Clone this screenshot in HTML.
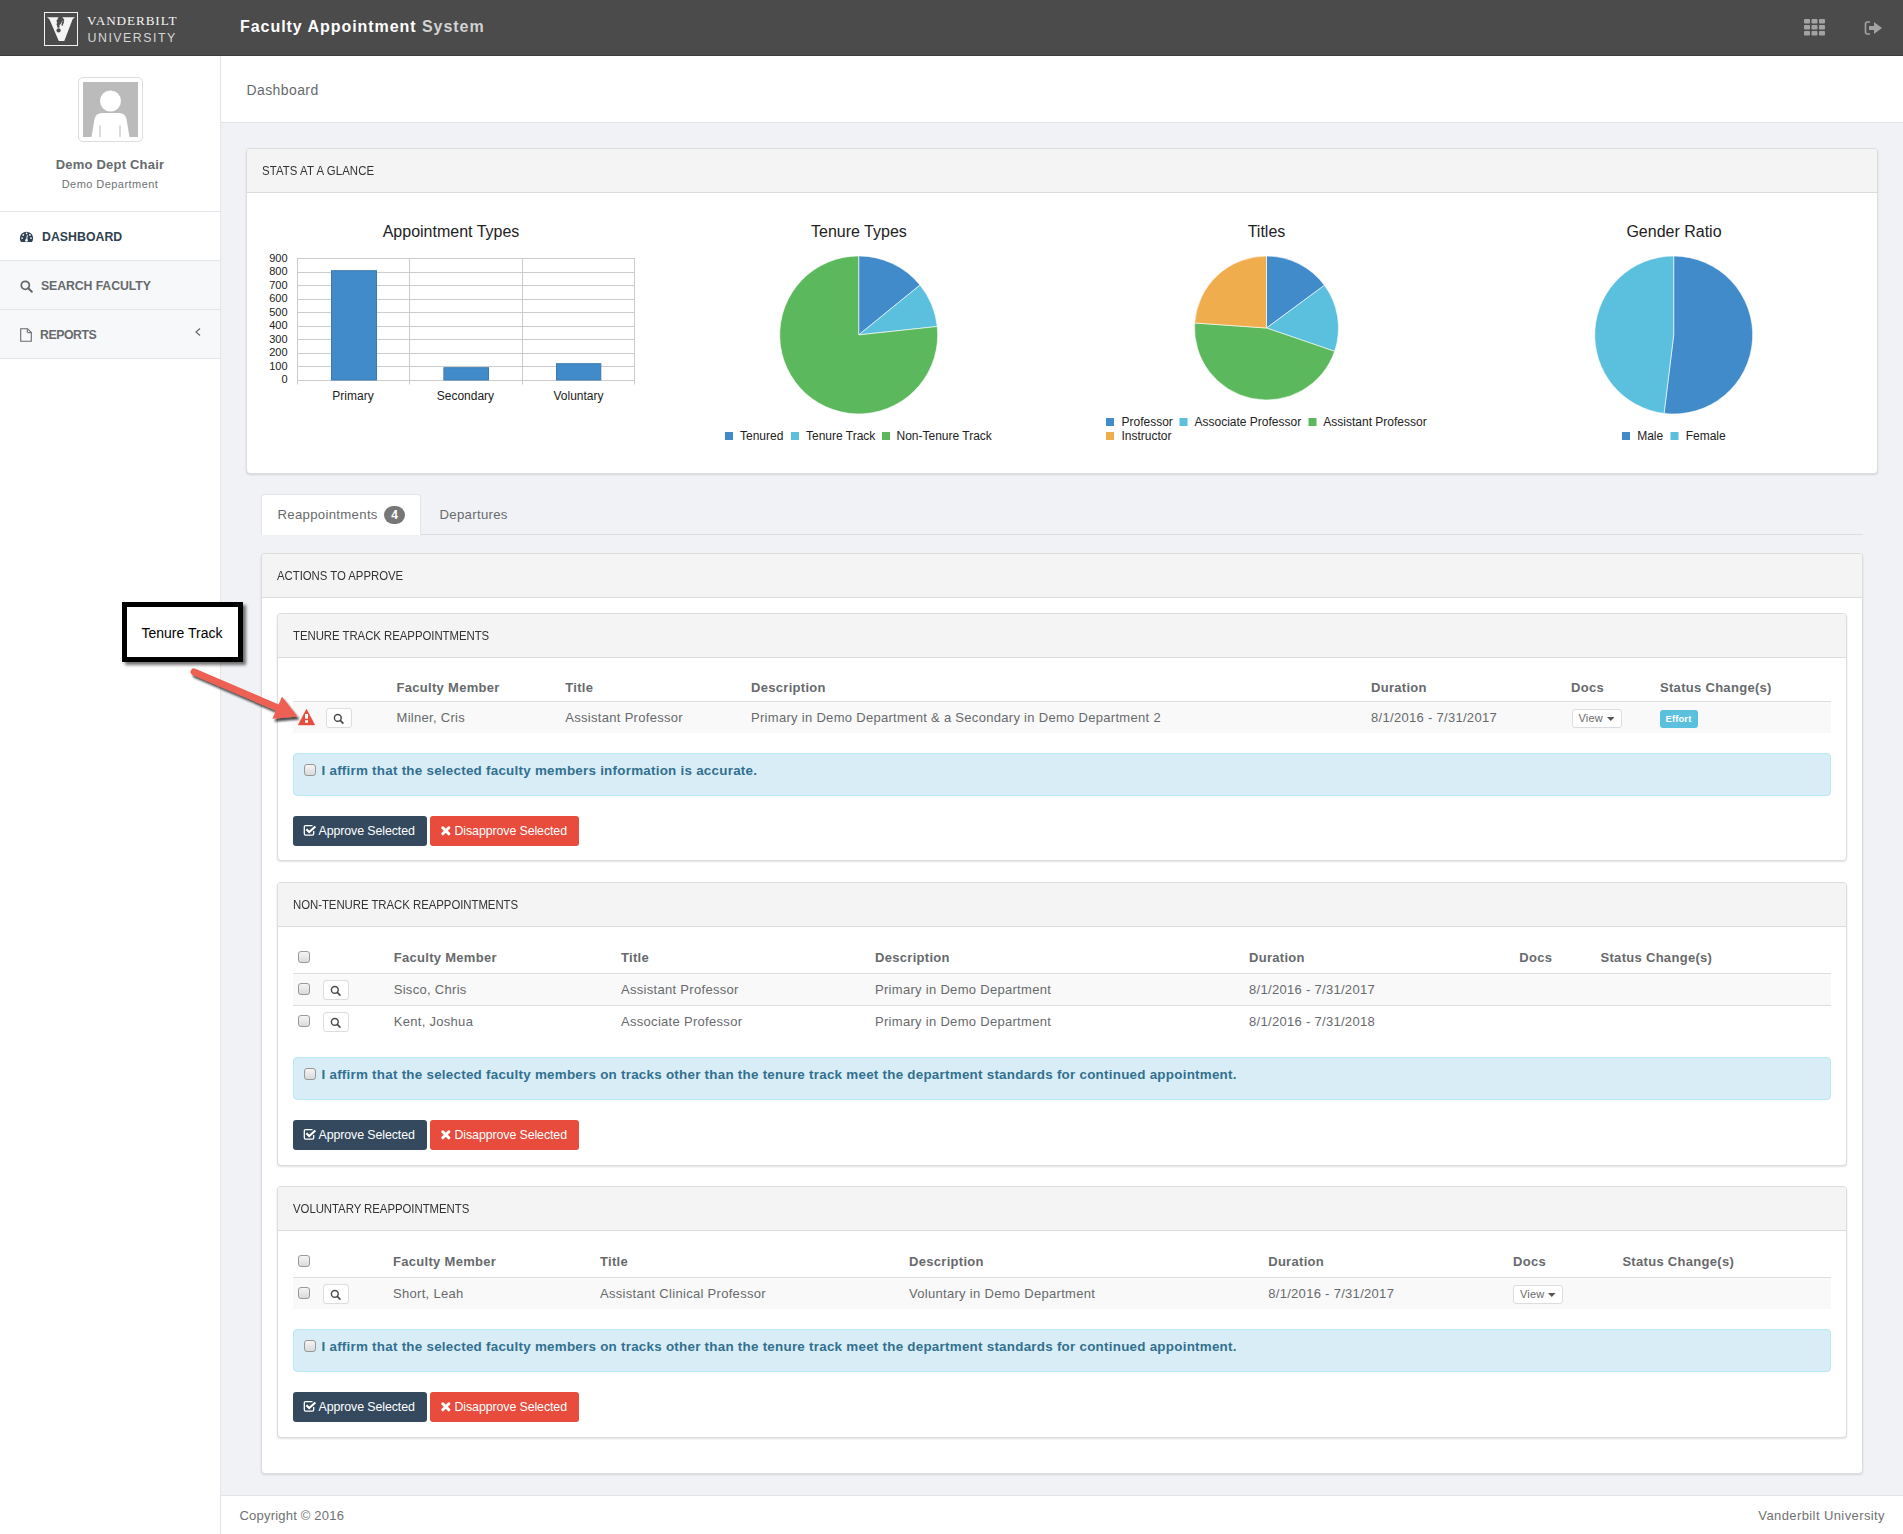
<!DOCTYPE html>
<html><head><meta charset="utf-8">
<style>
*{box-sizing:border-box;margin:0;padding:0}
html,body{width:1903px;height:1534px;overflow:hidden}
body{position:relative;background:#f1f2f6;font-family:"Liberation Sans",sans-serif;color:#676a6c;font-size:13px}
.abs{position:absolute}
.t{position:absolute;white-space:nowrap;line-height:1}
#hdr{left:0;top:0;width:1903px;height:56px;background:#4b4b4b;border-bottom:1px solid #3d3d3d}
#side{left:0;top:56px;width:221px;height:1478px;background:#fff;border-right:1px solid #e4e5e7}
.hl{position:absolute;left:0;width:220px;height:1px;background:#e4e5e7}
.navbg{position:absolute;left:0;width:220px;background:#f7f8fa}
#ph{left:221px;top:56px;width:1682px;height:67px;background:#fff;border-bottom:1px solid #e2e3e6}
#foot{left:221px;top:1495px;width:1682px;height:39px;background:#fff;border-top:1px solid #e2e3e6}
.panel{position:absolute;background:#fff;border:1px solid #dcdcdc;border-radius:4px;box-shadow:0 1px 2px rgba(0,0,0,.12)}
.ph{position:absolute;left:0;top:0;right:0;background:#f4f4f4;border-bottom:1px solid #dcdcdc;border-radius:3px 3px 0 0}
.ptitle{color:#333;font-size:12.6px;letter-spacing:-0.05px;transform:scaleX(0.905);transform-origin:0 0}
.th{font-weight:bold;color:#676a6c;font-size:13px;letter-spacing:0.3px}
.td{color:#676a6c;font-size:13px;letter-spacing:0.3px}
.row{position:absolute;background:#f9f9f9}
.rline{position:absolute;height:1px;background:#dedede}
.alert{position:absolute;background:#d9edf7;border:1px solid #bce8f1;border-radius:4px}
.atext{color:#31708f;font-weight:bold;font-size:13.4px;letter-spacing:0.25px}
.cb{position:absolute;width:12px;height:12px;border:1px solid #989898;border-radius:3px;background:linear-gradient(#f4f4f4,#dadada)}
.sbtn{position:absolute;width:26px;height:20px;border:1px solid #dcdde0;border-radius:3px;background:#fff}
.btn{position:absolute;height:30px;border-radius:3px;color:#fff;font-size:12px;letter-spacing:0.1px}
.approve{background:#34495e}
.disapprove{background:#e74c3c}
</style></head><body>

<!-- HEADER -->
<div id="hdr" class="abs"></div>
<div class="abs" style="left:44px;top:12px;width:34px;height:34px;border:1.6px solid #f2f2f2"></div>
<svg class="abs" style="left:44px;top:12px" width="34" height="34" viewBox="0 0 34 34">
  <path d="M3 5.2 L14.8 5.2 L13.6 6.6 L16.6 12.5 L19.4 6.6 L18.2 5.2 L31 5.2 L28.6 7.2 L20.3 29 L14.8 29 L5.4 7.2 Z" fill="#f4f4f4"/>
  <g fill="#4b4b4b">
    <path d="M13.2 7.2 C15.6 7.6 16.4 9.4 15.6 10.6 C16.8 11.4 16.4 12.8 15.2 13.2 C16.2 14.2 15.8 15.6 14.4 15.8 C13 15.6 12.6 14.4 13.4 13.6 C12.2 13 12.2 11.6 13.4 11 C12.4 10 12.4 8.4 13.2 7.2 Z"/>
    <circle cx="14.6" cy="18.4" r="2.1"/>
    <path d="M19.6 6.8 C20.6 7.6 20.4 8.8 19.6 9.4 C20.4 10.2 20 11.4 19 11.8 C19.4 12.8 18.8 13.8 18 14 L17.4 13 C18 12 17.8 10.6 18.4 9.6 C18 8.6 18.6 7.4 19.6 6.8 Z"/>
  </g>
</svg>
<div class="t" style="left:87px;top:13.5px;font-family:'Liberation Serif',serif;font-size:13.2px;letter-spacing:0.9px;color:#f4f4f4">VANDERBILT</div>
<div class="t" style="left:87.5px;top:31.5px;font-size:12.4px;letter-spacing:1.5px;color:#d6d6d6;font-weight:normal">UNIVERSITY</div>
<div class="t" style="left:240px;top:19px;font-size:16px;font-weight:bold;color:#fff;letter-spacing:0.95px">Faculty Appointment <span style="color:#d2d2d2">System</span></div>
<svg class="abs" style="left:1804px;top:19px" width="21" height="17" viewBox="0 0 21 17">
  <g fill="#a3a3a3">
    <rect x="0" y="0" width="6" height="4.5" rx="1"/><rect x="7.5" y="0" width="6" height="4.5" rx="1"/><rect x="15" y="0" width="6" height="4.5" rx="1"/>
    <rect x="0" y="6" width="6" height="4.5" rx="1"/><rect x="7.5" y="6" width="6" height="4.5" rx="1"/><rect x="15" y="6" width="6" height="4.5" rx="1"/>
    <rect x="0" y="12" width="6" height="4.5" rx="1"/><rect x="7.5" y="12" width="6" height="4.5" rx="1"/><rect x="15" y="12" width="6" height="4.5" rx="1"/>
  </g>
</svg>
<svg class="abs" style="left:1864px;top:20px" width="19" height="16" viewBox="0 0 19 16">
  <path d="M6 2 H3.5 Q1.5 2 1.5 4 V12 Q1.5 14 3.5 14 H6" fill="none" stroke="#a3a3a3" stroke-width="1.6"/>
  <path d="M5 6 H10 V2 L18 8 L10 14 V10 H5 Z" fill="#a3a3a3"/>
</svg>

<!-- SIDEBAR -->
<div id="side" class="abs"></div>
<div class="abs" style="left:78px;top:77px;width:65px;height:65px;border:1px solid #dcdcdc;border-radius:5px;background:#fff"></div>
<svg class="abs" style="left:83px;top:82px" width="55" height="55" viewBox="0 0 55 55">
  <rect width="55" height="55" fill="#bbbbbb"/>
  <circle cx="27.5" cy="19" r="10.5" fill="#fff"/>
  <path d="M8.5 55 L11.5 37 Q13 31 19 31 H36 Q42 31 43.5 37 L46.5 55 Z" fill="#fff"/>
  <rect x="16" y="43.5" width="2" height="11.5" fill="#dcdcdc"/><rect x="36" y="43.5" width="2" height="11.5" fill="#dcdcdc"/>
</svg>
<div class="t" style="left:0;width:220px;text-align:center;top:157.5px;font-size:13px;font-weight:bold;color:#676a6c;letter-spacing:0.2px">Demo Dept Chair</div>
<div class="t" style="left:0;width:220px;text-align:center;top:178.5px;font-size:11px;color:#6f7274;letter-spacing:0.45px">Demo Department</div>
<div class="hl" style="top:211px"></div>
<div class="navbg" style="top:261px;height:48px"></div>
<div class="navbg" style="top:310px;height:48px"></div>
<div class="hl" style="top:260px"></div>
<div class="hl" style="top:309px"></div>
<div class="hl" style="top:358px"></div>
<svg class="abs" style="left:19px;top:231px" width="15" height="12" viewBox="0 0 15 12">
  <path d="M2.03 11 A6.6 6.6 0 1 1 12.97 11 Z" fill="#2f4050"/>
  <g fill="#fff"><circle cx="7.6" cy="2.4" r="0.9"/><circle cx="4.3" cy="3.9" r="0.9"/><circle cx="10.9" cy="3.9" r="0.9"/><circle cx="3.1" cy="7.1" r="0.9"/><circle cx="12" cy="7.1" r="0.9"/><circle cx="7.5" cy="9.4" r="1.3"/></g>
  <line x1="8.4" y1="4.2" x2="7.5" y2="9.4" stroke="#fff" stroke-width="1"/>
</svg>
<div class="t" style="left:42px;top:230.5px;font-size:12.3px;font-weight:bold;color:#2f4050;letter-spacing:0.04px">DASHBOARD</div>
<svg class="abs" style="left:20px;top:280px" width="13" height="13" viewBox="0 0 13 13">
  <circle cx="5.3" cy="5.3" r="4" fill="none" stroke="#676a6c" stroke-width="1.8"/><line x1="8.3" y1="8.3" x2="11.8" y2="11.8" stroke="#676a6c" stroke-width="2" stroke-linecap="round"/>
</svg>
<div class="t" style="left:41px;top:279.5px;font-size:12.3px;font-weight:bold;color:#676a6c;letter-spacing:-0.1px">SEARCH FACULTY</div>
<svg class="abs" style="left:20px;top:328px" width="12" height="14" viewBox="0 0 12 14">
  <path d="M0.7 0.7 H7.5 L11.3 4.5 V13.3 H0.7 Z" fill="none" stroke="#676a6c" stroke-width="1.1"/><path d="M7.3 0.7 V4.7 H11.3" fill="none" stroke="#676a6c" stroke-width="1"/>
</svg>
<div class="t" style="left:40px;top:328.5px;font-size:12.3px;font-weight:bold;color:#676a6c;letter-spacing:-0.45px">REPORTS</div>
<svg class="abs" style="left:195px;top:328px" width="6" height="8" viewBox="0 0 6 8"><path d="M5 0.5 L1 4 L5 7.5" fill="none" stroke="#676a6c" stroke-width="1.2"/></svg>

<!-- PAGE HEADING -->
<div id="ph" class="abs"></div>
<div class="t" style="left:246.5px;top:82.5px;font-size:14px;color:#676a6c;letter-spacing:0.4px">Dashboard</div>

<!-- FOOTER -->
<div id="foot" class="abs"></div>
<div class="t" style="left:239.5px;top:1509px;font-size:13px;color:#6f7274;letter-spacing:0.2px">Copyright © 2016</div>
<div class="t" style="right:18px;top:1509px;font-size:13px;color:#6f7274;letter-spacing:0.4px">Vanderbilt University</div>

<!-- STATS PANEL -->
<div class="panel" style="left:246px;top:148px;width:1632px;height:326px"><div class="ph" style="height:44px"></div></div>
<div class="t ptitle" style="left:262px;top:164.5px;letter-spacing:0.1px">STATS AT A GLANCE</div>
<svg class="abs" style="left:0;top:0" width="1903" height="500" viewBox="0 0 1903 500" font-family="Liberation Sans, sans-serif">
<g font-size="16" fill="#222" text-anchor="middle">
<text x="451" y="237.2">Appointment Types</text>
<text x="858.9" y="237.2">Tenure Types</text>
<text x="1266.5" y="237.2">Titles</text>
<text x="1674" y="237.2">Gender Ratio</text>
</g>
<line x1="297" y1="258.5" x2="635" y2="258.5" stroke="#cccccc" stroke-width="1"/>
<text x="287.5" y="261.8" text-anchor="end" font-size="11" fill="#222">900</text>
<line x1="297" y1="272.5" x2="635" y2="272.5" stroke="#cccccc" stroke-width="1"/>
<text x="287.5" y="275.3" text-anchor="end" font-size="11" fill="#222">800</text>
<line x1="297" y1="285.5" x2="635" y2="285.5" stroke="#cccccc" stroke-width="1"/>
<text x="287.5" y="288.8" text-anchor="end" font-size="11" fill="#222">700</text>
<line x1="297" y1="299.5" x2="635" y2="299.5" stroke="#cccccc" stroke-width="1"/>
<text x="287.5" y="302.3" text-anchor="end" font-size="11" fill="#222">600</text>
<line x1="297" y1="312.5" x2="635" y2="312.5" stroke="#cccccc" stroke-width="1"/>
<text x="287.5" y="315.8" text-anchor="end" font-size="11" fill="#222">500</text>
<line x1="297" y1="326.5" x2="635" y2="326.5" stroke="#cccccc" stroke-width="1"/>
<text x="287.5" y="329.3" text-anchor="end" font-size="11" fill="#222">400</text>
<line x1="297" y1="339.5" x2="635" y2="339.5" stroke="#cccccc" stroke-width="1"/>
<text x="287.5" y="342.8" text-anchor="end" font-size="11" fill="#222">300</text>
<line x1="297" y1="353.5" x2="635" y2="353.5" stroke="#cccccc" stroke-width="1"/>
<text x="287.5" y="356.3" text-anchor="end" font-size="11" fill="#222">200</text>
<line x1="297" y1="366.5" x2="635" y2="366.5" stroke="#cccccc" stroke-width="1"/>
<text x="287.5" y="369.8" text-anchor="end" font-size="11" fill="#222">100</text>
<line x1="297" y1="380.5" x2="635" y2="380.5" stroke="#cccccc" stroke-width="1"/>
<text x="287.5" y="383.3" text-anchor="end" font-size="11" fill="#222">0</text>
<line x1="297.5" y1="258" x2="297.5" y2="384.5" stroke="#cccccc" stroke-width="1"/>
<line x1="409.5" y1="258" x2="409.5" y2="384.5" stroke="#cccccc" stroke-width="1"/>
<line x1="522.5" y1="258" x2="522.5" y2="384.5" stroke="#cccccc" stroke-width="1"/>
<line x1="634.5" y1="258" x2="634.5" y2="384.5" stroke="#cccccc" stroke-width="1"/>
<rect x="331.5" y="270.7" width="45" height="109.30000000000001" fill="#428bca" stroke="#3a7ab3" stroke-width="1"/>
<rect x="443.9" y="367.7" width="44.60000000000002" height="12.300000000000011" fill="#428bca" stroke="#3a7ab3" stroke-width="1"/>
<rect x="556.5" y="363.7" width="44.299999999999955" height="16.30000000000001" fill="#428bca" stroke="#3a7ab3" stroke-width="1"/>
<text x="353" y="399.5" text-anchor="middle" font-size="12" fill="#222">Primary</text>
<text x="465.4" y="399.5" text-anchor="middle" font-size="12" fill="#222">Secondary</text>
<text x="578.5" y="399.5" text-anchor="middle" font-size="12" fill="#222">Voluntary</text>
<path d="M858.7,334.9 L858.70,255.90 A79,79 0 0 1 920.01,285.08 Z" fill="#428bca" stroke="#fff" stroke-width="0.6"/>
<path d="M858.7,334.9 L920.01,285.08 A79,79 0 0 1 937.25,326.51 Z" fill="#5bc0de" stroke="#fff" stroke-width="0.6"/>
<path d="M858.7,334.9 L937.25,326.51 A79,79 0 1 1 858.70,255.90 Z" fill="#5cb85c" stroke="#fff" stroke-width="0.6"/>
<path d="M1266.5,328 L1266.50,256.00 A72,72 0 0 1 1324.45,285.27 Z" fill="#428bca" stroke="#fff" stroke-width="0.6"/>
<path d="M1266.5,328 L1324.45,285.27 A72,72 0 0 1 1334.62,351.32 Z" fill="#5bc0de" stroke="#fff" stroke-width="0.6"/>
<path d="M1266.5,328 L1334.62,351.32 A72,72 0 0 1 1194.68,322.98 Z" fill="#5cb85c" stroke="#fff" stroke-width="0.6"/>
<path d="M1266.5,328 L1194.68,322.98 A72,72 0 0 1 1266.50,256.00 Z" fill="#f0ad4e" stroke="#fff" stroke-width="0.6"/>
<path d="M1673.7,335 L1673.70,256.00 A79,79 0 1 1 1664.07,413.41 Z" fill="#428bca" stroke="#fff" stroke-width="0.6"/>
<path d="M1673.7,335 L1664.07,413.41 A79,79 0 0 1 1673.70,256.00 Z" fill="#5bc0de" stroke="#fff" stroke-width="0.6"/>
<g font-size="12" fill="#222">
<rect x="725" y="432" width="8" height="8" fill="#428bca"/><text x="740" y="440">Tenured</text>
<rect x="791" y="432" width="8" height="8" fill="#5bc0de"/><text x="806" y="440">Tenure Track</text>
<rect x="882" y="432" width="8" height="8" fill="#5cb85c"/><text x="896.5" y="440">Non-Tenure Track</text>
<rect x="1106" y="418" width="8" height="8" fill="#428bca"/><text x="1121.5" y="426">Professor</text>
<rect x="1179.5" y="418" width="8" height="8" fill="#5bc0de"/><text x="1194.5" y="426">Associate Professor</text>
<rect x="1308.5" y="418" width="8" height="8" fill="#5cb85c"/><text x="1323.3" y="426">Assistant Professor</text>
<rect x="1106" y="432" width="8" height="8" fill="#f0ad4e"/><text x="1121.5" y="440">Instructor</text>
<rect x="1622" y="432" width="8" height="8" fill="#428bca"/><text x="1637.2" y="440">Male</text>
<rect x="1670.5" y="432" width="8" height="8" fill="#5bc0de"/><text x="1685.7" y="440">Female</text>
</g>
</svg>

<!--TABS-->
<div class="abs" style="left:421px;top:534px;width:1442px;height:1px;background:#dcdde0"></div>
<div class="abs" style="left:261px;top:494px;width:160px;height:41px;background:#fff;border:1px solid #e3e4e7;border-bottom:none;border-radius:4px 4px 0 0"></div>
<div class="t" style="left:277.5px;top:508px;font-size:13.2px;color:#676a6c;letter-spacing:0.3px">Reappointments</div>
<div class="abs" style="left:384px;top:506px;width:21px;height:18px;border-radius:9px;background:#777;color:#fff;font-weight:bold;font-size:12px;line-height:18px;text-align:center">4</div>
<div class="t" style="left:439.5px;top:508px;font-size:13.2px;color:#676a6c;letter-spacing:0.3px">Departures</div>
<!--ACTIONS-->
<div class="panel" style="left:261px;top:553px;width:1602px;height:921px"><div class="ph" style="height:44px"></div></div>
<div class="t ptitle" style="left:277px;top:569.5px">ACTIONS TO APPROVE</div>
<div class="panel" style="left:277px;top:613px;width:1570px;height:248px"><div class="ph" style="height:44px"></div></div><div class="t ptitle" style="left:293px;top:629.5px">TENURE TRACK REAPPOINTMENTS</div>
<div class="t th" style="left:396.5px;top:681px">Faculty Member</div><div class="t th" style="left:565.3px;top:681px">Title</div><div class="t th" style="left:751px;top:681px">Description</div><div class="t th" style="left:1371px;top:681px">Duration</div><div class="t th" style="left:1571px;top:681px">Docs</div><div class="t th" style="left:1660px;top:681px">Status Change(s)</div>
<div class="rline" style="left:293px;top:701px;width:1538px"></div>
<div class="row" style="left:293px;top:702px;width:1538px;height:31px"></div>
<svg class="abs" style="left:297px;top:708px" width="19" height="18" viewBox="0 0 19 18"><path d="M9.5 1.2 L17.8 16.9 H1.2 Z" fill="#e74c3c" stroke="#e74c3c" stroke-width="0.5" stroke-linejoin="round"/><rect x="8.1" y="6" width="2.9" height="4.8" fill="#fff"/><rect x="8.1" y="12.2" width="2.9" height="2.6" fill="#fff"/></svg>
<div class="sbtn" style="left:326px;top:708px"></div><svg class="abs" style="left:333px;top:712.5px" width="12" height="12" viewBox="0 0 12 12"><circle cx="4.8" cy="4.9" r="3.4" fill="none" stroke="#4a4a4a" stroke-width="1.45"/><line x1="7.3" y1="7.4" x2="9.9" y2="10.1" stroke="#4a4a4a" stroke-width="1.7" stroke-linecap="round"/></svg>
<div class="t td" style="left:396.5px;top:711px">Milner, Cris</div><div class="t td" style="left:565.3px;top:711px">Assistant Professor</div><div class="t td" style="left:751px;top:711px">Primary in Demo Department &amp; a Secondary in Demo Department 2</div><div class="t td" style="left:1371px;top:711px">8/1/2016 - 7/31/2017</div>
<div class="sbtn" style="left:1571.5px;top:708.5px;width:50px;height:19px"></div><div class="t" style="left:1578.5px;top:713.0px;font-size:11px;color:#676a6c;letter-spacing:0.2px">View</div><svg class="abs" style="left:1606.5px;top:716.5px" width="8" height="4" viewBox="0 0 8 4"><path d="M0 0 H7.5 L3.75 4 Z" fill="#555"/></svg>
<div class="abs" style="left:1660px;top:710px;width:38px;height:18px;border-radius:3px;background:#5bc0de"></div><div class="t" style="left:1665.5px;top:713.5px;font-size:9.5px;font-weight:bold;color:#fff;letter-spacing:0.1px">Effort</div>
<div class="alert" style="left:293px;top:753px;width:1538px;height:43px"></div><div class="cb" style="left:304px;top:763.5px"></div><div class="t atext" style="left:321.5px;top:764px">I affirm that the selected faculty members information is accurate.</div>
<div class="btn approve" style="left:293px;top:816px;width:134px"></div><svg class="abs" style="left:303px;top:824px" width="14" height="13" viewBox="0 0 14 13"><path d="M9.5 1.6 H2.6 Q1.3 1.6 1.3 2.9 V9.8 Q1.3 11.1 2.6 11.1 H9.4 Q10.7 11.1 10.7 9.8 V7" fill="none" stroke="#fff" stroke-width="1.3"/><path d="M3.4 5.2 L6.2 8.1 L12.4 2.4" fill="none" stroke="#fff" stroke-width="2.1"/></svg><div class="t" style="left:318.5px;top:824.5px;font-size:12.4px;color:#fff;letter-spacing:-0.1px">Approve Selected</div><div class="btn disapprove" style="left:430px;top:816px;width:149px"></div><svg class="abs" style="left:440.5px;top:825.5px" width="10" height="10" viewBox="0 0 10 10"><path d="M1.8 1.8 L7.8 7.8 M7.8 1.8 L1.8 7.8" stroke="#fff" stroke-width="3" stroke-linecap="round"/></svg><div class="t" style="left:454.5px;top:824.5px;font-size:12.4px;color:#fff;letter-spacing:-0.1px">Disapprove Selected</div>
<div class="panel" style="left:277px;top:882px;width:1570px;height:284px"><div class="ph" style="height:44px"></div></div><div class="t ptitle" style="left:293px;top:898.5px">NON-TENURE TRACK REAPPOINTMENTS</div>
<div class="cb" style="left:298px;top:951px"></div>
<div class="t th" style="left:393.7px;top:951px">Faculty Member</div><div class="t th" style="left:621px;top:951px">Title</div><div class="t th" style="left:875px;top:951px">Description</div><div class="t th" style="left:1249px;top:951px">Duration</div><div class="t th" style="left:1519.3px;top:951px">Docs</div><div class="t th" style="left:1600.5px;top:951px">Status Change(s)</div>
<div class="rline" style="left:293px;top:973px;width:1538px"></div>
<div class="row" style="left:293px;top:974px;width:1538px;height:31px"></div>
<div class="rline" style="left:293px;top:1005px;width:1538px"></div>
<div class="cb" style="left:298px;top:983px"></div>
<div class="sbtn" style="left:323px;top:980px"></div><svg class="abs" style="left:330px;top:984.5px" width="12" height="12" viewBox="0 0 12 12"><circle cx="4.8" cy="4.9" r="3.4" fill="none" stroke="#4a4a4a" stroke-width="1.45"/><line x1="7.3" y1="7.4" x2="9.9" y2="10.1" stroke="#4a4a4a" stroke-width="1.7" stroke-linecap="round"/></svg>
<div class="t td" style="left:393.7px;top:983px">Sisco, Chris</div><div class="t td" style="left:621px;top:983px">Assistant Professor</div><div class="t td" style="left:875px;top:983px">Primary in Demo Department</div><div class="t td" style="left:1249px;top:983px">8/1/2016 - 7/31/2017</div>
<div class="cb" style="left:298px;top:1015px"></div>
<div class="sbtn" style="left:323px;top:1012px"></div><svg class="abs" style="left:330px;top:1016.5px" width="12" height="12" viewBox="0 0 12 12"><circle cx="4.8" cy="4.9" r="3.4" fill="none" stroke="#4a4a4a" stroke-width="1.45"/><line x1="7.3" y1="7.4" x2="9.9" y2="10.1" stroke="#4a4a4a" stroke-width="1.7" stroke-linecap="round"/></svg>
<div class="t td" style="left:393.7px;top:1015px">Kent, Joshua</div><div class="t td" style="left:621px;top:1015px">Associate Professor</div><div class="t td" style="left:875px;top:1015px">Primary in Demo Department</div><div class="t td" style="left:1249px;top:1015px">8/1/2016 - 7/31/2018</div>
<div class="alert" style="left:293px;top:1057px;width:1538px;height:42.5px"></div><div class="cb" style="left:304px;top:1067.5px"></div><div class="t atext" style="left:321.5px;top:1068px">I affirm that the selected faculty members on tracks other than the tenure track meet the department standards for continued appointment.</div>
<div class="btn approve" style="left:293px;top:1120px;width:134px"></div><svg class="abs" style="left:303px;top:1128px" width="14" height="13" viewBox="0 0 14 13"><path d="M9.5 1.6 H2.6 Q1.3 1.6 1.3 2.9 V9.8 Q1.3 11.1 2.6 11.1 H9.4 Q10.7 11.1 10.7 9.8 V7" fill="none" stroke="#fff" stroke-width="1.3"/><path d="M3.4 5.2 L6.2 8.1 L12.4 2.4" fill="none" stroke="#fff" stroke-width="2.1"/></svg><div class="t" style="left:318.5px;top:1128.5px;font-size:12.4px;color:#fff;letter-spacing:-0.1px">Approve Selected</div><div class="btn disapprove" style="left:430px;top:1120px;width:149px"></div><svg class="abs" style="left:440.5px;top:1129.5px" width="10" height="10" viewBox="0 0 10 10"><path d="M1.8 1.8 L7.8 7.8 M7.8 1.8 L1.8 7.8" stroke="#fff" stroke-width="3" stroke-linecap="round"/></svg><div class="t" style="left:454.5px;top:1128.5px;font-size:12.4px;color:#fff;letter-spacing:-0.1px">Disapprove Selected</div>
<div class="panel" style="left:277px;top:1186px;width:1570px;height:252px"><div class="ph" style="height:44px"></div></div><div class="t ptitle" style="left:293px;top:1202.5px">VOLUNTARY REAPPOINTMENTS</div>
<div class="cb" style="left:298px;top:1255px"></div>
<div class="t th" style="left:393px;top:1255px">Faculty Member</div><div class="t th" style="left:600px;top:1255px">Title</div><div class="t th" style="left:909px;top:1255px">Description</div><div class="t th" style="left:1268.2px;top:1255px">Duration</div><div class="t th" style="left:1513.1px;top:1255px">Docs</div><div class="t th" style="left:1622.4px;top:1255px">Status Change(s)</div>
<div class="rline" style="left:293px;top:1277px;width:1538px"></div>
<div class="row" style="left:293px;top:1278px;width:1538px;height:31px"></div>
<div class="cb" style="left:298px;top:1287px"></div>
<div class="sbtn" style="left:323px;top:1284px"></div><svg class="abs" style="left:330px;top:1288.5px" width="12" height="12" viewBox="0 0 12 12"><circle cx="4.8" cy="4.9" r="3.4" fill="none" stroke="#4a4a4a" stroke-width="1.45"/><line x1="7.3" y1="7.4" x2="9.9" y2="10.1" stroke="#4a4a4a" stroke-width="1.7" stroke-linecap="round"/></svg>
<div class="t td" style="left:393px;top:1287px">Short, Leah</div><div class="t td" style="left:600px;top:1287px">Assistant Clinical Professor</div><div class="t td" style="left:909px;top:1287px">Voluntary in Demo Department</div><div class="t td" style="left:1268.2px;top:1287px">8/1/2016 - 7/31/2017</div>
<div class="sbtn" style="left:1513px;top:1284.5px;width:50px;height:19px"></div><div class="t" style="left:1520px;top:1289.0px;font-size:11px;color:#676a6c;letter-spacing:0.2px">View</div><svg class="abs" style="left:1548px;top:1292.5px" width="8" height="4" viewBox="0 0 8 4"><path d="M0 0 H7.5 L3.75 4 Z" fill="#555"/></svg>
<div class="alert" style="left:293px;top:1329px;width:1538px;height:42.5px"></div><div class="cb" style="left:304px;top:1339.5px"></div><div class="t atext" style="left:321.5px;top:1340px">I affirm that the selected faculty members on tracks other than the tenure track meet the department standards for continued appointment.</div>
<div class="btn approve" style="left:293px;top:1392px;width:134px"></div><svg class="abs" style="left:303px;top:1400px" width="14" height="13" viewBox="0 0 14 13"><path d="M9.5 1.6 H2.6 Q1.3 1.6 1.3 2.9 V9.8 Q1.3 11.1 2.6 11.1 H9.4 Q10.7 11.1 10.7 9.8 V7" fill="none" stroke="#fff" stroke-width="1.3"/><path d="M3.4 5.2 L6.2 8.1 L12.4 2.4" fill="none" stroke="#fff" stroke-width="2.1"/></svg><div class="t" style="left:318.5px;top:1400.5px;font-size:12.4px;color:#fff;letter-spacing:-0.1px">Approve Selected</div><div class="btn disapprove" style="left:430px;top:1392px;width:149px"></div><svg class="abs" style="left:440.5px;top:1401.5px" width="10" height="10" viewBox="0 0 10 10"><path d="M1.8 1.8 L7.8 7.8 M7.8 1.8 L1.8 7.8" stroke="#fff" stroke-width="3" stroke-linecap="round"/></svg><div class="t" style="left:454.5px;top:1400.5px;font-size:12.4px;color:#fff;letter-spacing:-0.1px">Disapprove Selected</div>
<!--CALLOUT-->
<div class="abs" style="left:122px;top:602px;width:121px;height:60px;border:5px solid #000;background:#fff;box-shadow:3px 3px 3px rgba(0,0,0,.55)"></div>
<div class="t" style="left:141.5px;top:625.5px;font-size:14px;color:#000">Tenure Track</div>
<svg class="abs" style="left:180px;top:660px" width="130" height="70" viewBox="180 660 130 70">
<defs><filter id="sh" x="-20%" y="-20%" width="140%" height="150%"><feGaussianBlur in="SourceAlpha" stdDeviation="1.2"/><feOffset dx="1.6" dy="2.8"/><feComponentTransfer><feFuncA type="linear" slope="0.7"/></feComponentTransfer><feMerge><feMergeNode/><feMergeNode in="SourceGraphic"/></feMerge></filter></defs>
<g filter="url(#sh)" fill="#ee6153">
<line x1="194" y1="671.8" x2="278" y2="707.8" stroke="#ee6153" stroke-width="6.8" stroke-linecap="round"/>
<path d="M297.6 716.4 L272.4 718.7 L282.0 696.5 Z"/>
</g>
</svg>
</body></html>
